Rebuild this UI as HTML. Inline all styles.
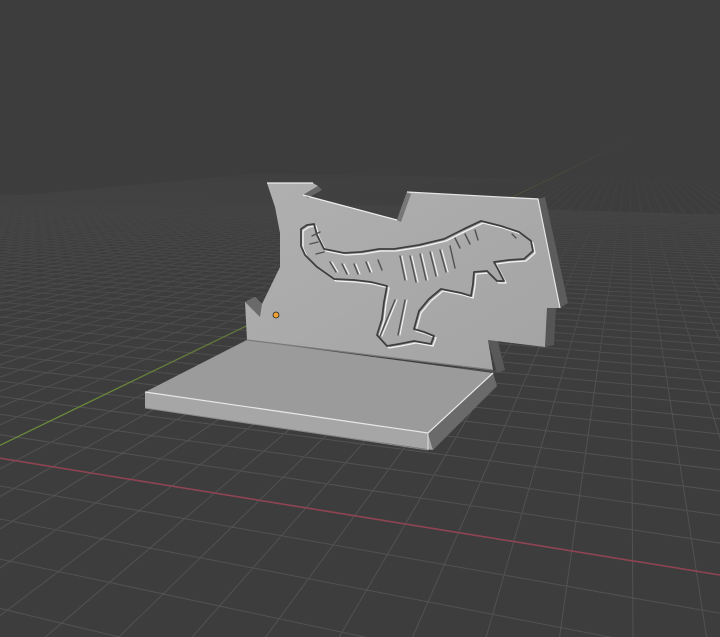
<!DOCTYPE html>
<html><head><meta charset="utf-8">
<style>html,body{margin:0;padding:0;background:#3d3d3d;width:720px;height:637px;overflow:hidden}svg{position:absolute;left:0;top:0;display:block}</style>
</head><body>
<svg id="s" width="720" height="637" viewBox="0 0 720 637" xmlns="http://www.w3.org/2000/svg">
<defs>
<linearGradient id="fade" x1="0" y1="0" x2="0" y2="1">
<stop offset="0" stop-color="#3d3d3d" stop-opacity="1"/>
<stop offset="0.22" stop-color="#3d3d3d" stop-opacity="1"/>
<stop offset="0.45" stop-color="#3d3d3d" stop-opacity="0.4"/>
<stop offset="0.65" stop-color="#3d3d3d" stop-opacity="0"/>
</linearGradient>
<linearGradient id="face" x1="0" y1="0" x2="1" y2="1">
<stop offset="0" stop-color="#b0b0b0"/><stop offset="1" stop-color="#a3a3a3"/>
</linearGradient>
<path id="d" d="M302,230 L308,226 315,225 318,236 325,250 345,254 362,253 380,250 395,250 420,246 445,240 465,230 482,222 502,227 520,233 532,242 534,252 525,260 510,261 495,263 500,272 505,282 498,282 488,272 475,273 474,285 472,297 462,294 452,292 442,290 430,300 420,312 415,330 425,333 435,337 432,345 415,342 400,345 388,347 378,336 383,320 385,303 388,287 372,283 355,281 335,280 318,268 306,256 302,247 Z"/>
</defs>
<rect width="720" height="637" fill="#3d3d3d"/>
<g id="grid" stroke="#525252" stroke-width="1" fill="none"></g>
<line x1="-20" y1="455" x2="630" y2="140" stroke="#6b8a3a" stroke-width="1.3"/>
<line x1="-20" y1="455" x2="720" y2="575" stroke="#8f4452" stroke-width="1.6"/>
<rect width="720" height="637" fill="url(#fade)"/>

<!-- base plate -->
<polygon points="145,392 428,433 433,450 145,408" fill="#a6a6a6"/>
<polygon points="428,433 493,373 497,386 433,450" fill="#6a6a6a"/>
<polygon points="145,392 247,340 493,373 428,433" fill="#9b9b9b"/>
<polyline points="145,392 428,433 493,373" fill="none" stroke="#e8e8e8" stroke-width="1.2"/>
<line x1="145" y1="408" x2="428" y2="450" stroke="#8a8a8a"/>
<line x1="428" y1="433" x2="428" y2="450" stroke="#ddd"/>

<!-- panel side faces -->
<polygon points="538,199 545,197 568,303 560,308" fill="#5c5c5c"/>
<polygon points="547,308 556,306 554,345 545,347" fill="#555"/>
<polygon points="488,340 497,338 505,370 497,373" fill="#595959"/>
<!-- panel front -->
<polygon points="267,183 313,183 318,186 303,195 397,220 407,192 538,199 560,308 547,308 545,347 488,340 493,370 247,340 245,302 255,297 262,304 280,267 280,233 275,207" fill="url(#face)"/>
<polygon points="245,302 255,297 262,304 260,317" fill="#6a6a6a"/>
<polygon points="303,195 318,186 322,190 308,198" fill="#666"/>
<polygon points="397,220 407,192 411,194 401,222" fill="#777"/>
<polyline points="267,183 313,183" stroke="#eee" stroke-width="1.3" fill="none"/>
<polyline points="303,195 397,220" stroke="#eee" stroke-width="1.2" fill="none"/>
<polyline points="407,192 538,199 560,308" stroke="#e6e6e6" stroke-width="1.2" fill="none"/>
<line x1="247" y1="340" x2="493" y2="370" stroke="#7a7a7a" stroke-width="1.2"/>

<!-- dino -->
<g fill="none" stroke-linecap="round" stroke-linejoin="round">
<g stroke="#f2f2f2" stroke-width="1.3" transform="translate(1,1)"><use href="#d"/></g>
<g stroke="#3e3e3e" stroke-width="1.8" transform="translate(-1,-1)"><use href="#d"/></g>
<g stroke="#505050" stroke-width="1.4">
<path d="M400,256 L405,280 M410,256 L416,282 M420,254 L426,280 M430,252 L436,276 M440,250 L446,272 M450,246 L455,268"/>
<path d="M330,262 L336,272 M342,264 L347,274 M354,264 L358,274 M366,262 L370,272 M378,260 L382,270"/>
<path d="M395,300 L380,336 M405,300 L398,335 M512,234 L516,238"/>
<path d="M455,238 L460,248 M465,234 L470,244 M475,230 L478,240"/>
<path d="M320,232 L312,236 M318,242 L310,244 M324,252 L316,254"/>
</g>
<g stroke="#f4f4f4" stroke-width="1.1">
<path d="M402,256 L407,280 M412,256 L418,282 M422,254 L428,280 M432,252 L438,276 M442,250 L448,272"/>
<path d="M332,262 L338,272 M344,264 L349,274 M356,264 L360,274 M368,262 L372,272"/>
<path d="M397,300 L382,336 M407,300 L400,335"/>
</g>
</g>
<circle cx="276" cy="315" r="3" fill="#f0a030" stroke="#222" stroke-width="0.8"/>
</svg>
<script>
(function(){
var g=document.getElementById('grid');
var a=0.06,b=0.018;
function P(u,v){var w=a*u+b*v+1;return [(a*u*630+b*v*(-1957)-20)/w,(a*u*140+b*v*140+455)/w,w];}
var s='';
function seg(fn){
 var pts=[];
 for(var t=-120;t<=120;t+=0.5){var p=fn(t);if(p[2]>0.004&&p[1]>120&&p[1]<700&&p[0]>-400&&p[0]<1200)pts.push(p);}
 if(pts.length>1){s+='M'+pts[0][0].toFixed(1)+','+pts[0][1].toFixed(1)+'L'+pts[pts.length-1][0].toFixed(1)+','+pts[pts.length-1][1].toFixed(1);}
}
for(var i=-60;i<=60;i++){
 if(i===0)continue;
 seg(function(t){return P(i,t);});
 seg(function(t){return P(t,i);});
}
var p=document.createElementNS('http://www.w3.org/2000/svg','path');
p.setAttribute('d',s);g.appendChild(p);
})();
</script>
</body></html>
